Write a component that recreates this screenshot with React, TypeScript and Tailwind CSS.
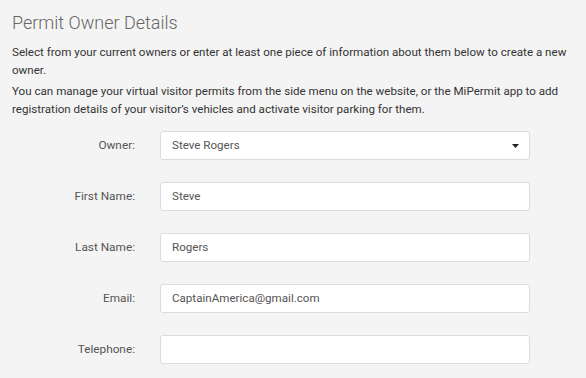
const fields = [
  { label: 'Owner:', value: 'Steve Rogers', select: true },
  { label: 'First Name:', value: 'Steve' },
  { label: 'Last Name:', value: 'Rogers' },
  { label: 'Email:', value: 'CaptainAmerica@gmail.com' },
  { label: 'Telephone:', value: '' },
]

export default function App() {
  return (
    <div
      className="h-[378px] w-[586px] overflow-hidden bg-[#f4f4f4] pl-3 text-[#333]"
      style={{ fontFamily: 'Roboto, "Liberation Sans", sans-serif' }}
    >
      <h1 className="pt-[9px] text-[18px] font-light leading-[28px] text-[#666]">Permit Owner Details</h1>
      <p className="mt-[6px] text-[11.6px] leading-[18px]">
        Select from your current owners or enter at least one piece of information about them below to create a new
        owner.
      </p>
      <p className="mt-[4px] pr-2 text-[11.6px] leading-[17.5px]">
        You can manage your virtual visitor permits from the side menu on the website, or the MiPermit app to add
        registration details of your visitor’s vehicles and activate visitor parking for them.
      </p>
      <div className="mt-[13px] flex flex-col gap-[22px]">
        {fields.map((f) => (
          <div key={f.label} className="flex items-center">
            <label className="w-[123px] text-right text-[11.8px] text-[#555]">{f.label}</label>
            <div className="ml-[25px] flex h-[29px] w-[370px] items-center justify-between rounded-[3px] border border-[#dcdcdc] bg-white pl-[11px] pr-[9px] text-[11.6px] text-[#555]">
              <span>{f.value}</span>
              {f.select && (
                <svg width="7" height="4" viewBox="0 0 7 4" className="mr-[1px]">
                  <path d="M0 0 L7 0 L3.5 4 Z" fill="#222" />
                </svg>
              )}
            </div>
          </div>
        ))}
      </div>
    </div>
  )
}
